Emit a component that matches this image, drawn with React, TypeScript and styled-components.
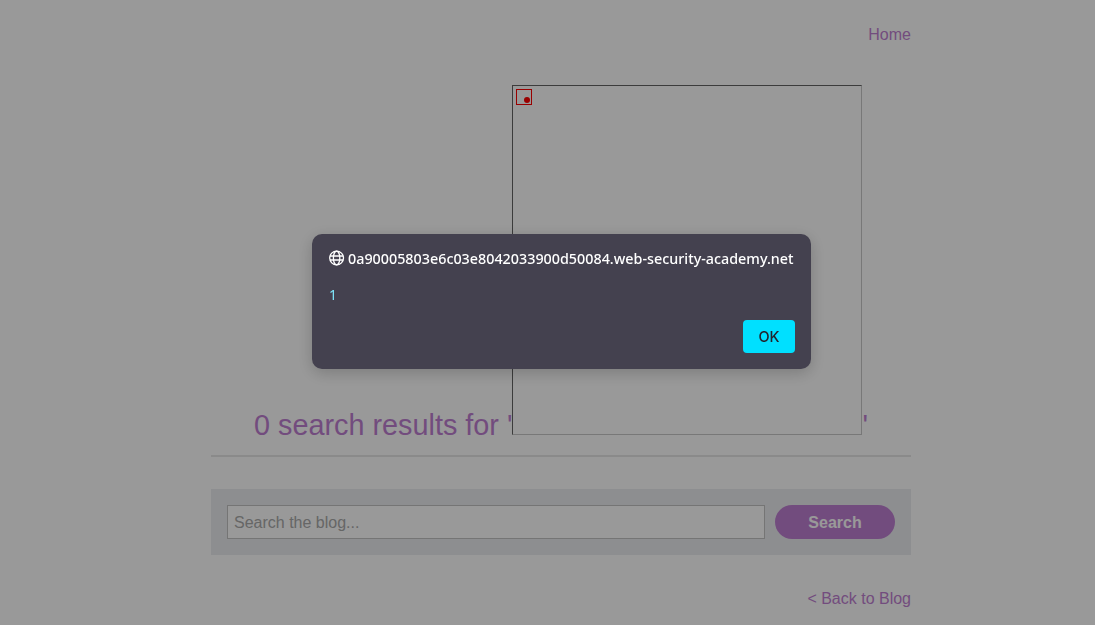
import React from 'react';
import styled, { createGlobalStyle } from 'styled-components';

const GlobalStyle = createGlobalStyle`
  html, body {
    margin: 0;
    padding: 0;
    height: 625px;
    overflow: hidden;
    background: #ffffff;
    font-family: "Liberation Sans", Arial, sans-serif;
  }
`;

const Page = styled.div`
  width: 700px;
  height: 625px;
  margin-left: 211px;
  display: flex;
  flex-direction: column;
`;

const TopNav = styled.nav`
  display: flex;
  justify-content: flex-end;
  height: 85px;
  padding-top: 26px;
  box-sizing: border-box;
`;

const NavLink = styled.a`
  color: #bf7fd2;
  font-size: 16px;
  line-height: 18px;
  text-decoration: none;
`;

const Heading = styled.h1`
  margin: 0;
  height: 372px;
  box-sizing: border-box;
  border-bottom: 2px solid #e6e6e6;
  color: #bf7fd2;
  font-size: 28.8px;
  font-weight: 400;
  line-height: 350px;
  text-align: center;
  white-space: nowrap;
`;

const Frame = styled.div`
  display: inline-block;
  position: relative;
  width: 350px;
  height: 350px;
  box-sizing: border-box;
  border: 1px solid #c8c8c8;
  border-top-color: #646464;
  border-left-color: #646464;
  background: #fff;
  vertical-align: baseline;
`;

const Marker = styled.svg`
  position: absolute;
  left: 3px;
  top: 3px;
  display: block;
`;

const SearchBar = styled.form`
  display: flex;
  align-items: center;
  gap: 10px;
  height: 66px;
  margin-top: 32px;
  padding: 0 16px;
  box-sizing: border-box;
  background: #ebedf0;
`;

const SearchInput = styled.input`
  flex: 1;
  min-width: 0;
  height: 34px;
  box-sizing: border-box;
  padding: 2px 6px 0;
  border: 1px solid #c4c4c4;
  background: #fff;
  font-family: inherit;
  font-size: 16px;
  &::placeholder {
    color: #aaaaaa;
    opacity: 1;
  }
`;

const SearchButton = styled.button`
  width: 120px;
  height: 34px;
  padding: 2px 0 0;
  border: 0;
  border-radius: 17px;
  background: #bf7fd2;
  color: #fff;
  font-family: inherit;
  font-size: 16px;
  font-weight: 700;
`;

const Footer = styled.div`
  display: flex;
  justify-content: flex-end;
  margin-top: 35px;
`;

const Overlay = styled.div`
  position: fixed;
  inset: 0;
  background: rgba(0, 0, 0, 0.4);
`;

const Dialog = styled.div`
  position: fixed;
  left: 312px;
  top: 234px;
  width: 499px;
  height: 135px;
  box-sizing: border-box;
  padding: 16px;
  border-radius: 10px;
  background: #44414f;
  box-shadow: 0 4px 16px rgba(0, 0, 0, 0.2);
  font-family: "Noto Sans", "Open Sans", sans-serif;
  display: flex;
  flex-direction: column;
`;

const DialogTitle = styled.div`
  display: flex;
  align-items: center;
  gap: 3px;
  height: 16px;
  padding-left: 1px;
  color: #fff;
  font-size: 14.33px;
  font-weight: 500;
  white-space: nowrap;
  svg {
    flex-shrink: 0;
  }
`;

const DialogMessage = styled.div`
  margin-top: 20px;
  padding-left: 1px;
  color: #7fe6fa;
  font-size: 14px;
  line-height: 18px;
`;

const DialogActions = styled.div`
  display: flex;
  justify-content: flex-end;
  margin-top: 16px;
`;

const OkButton = styled.button`
  width: 52px;
  height: 33px;
  padding: 0 0 1px 0;
  border: 0;
  border-radius: 4px;
  background: #00e0ff;
  color: #22252e;
  font-family: "Inter", sans-serif;
  font-size: 14.5px;
  font-weight: 500;
`;

const GlobeIcon = () => (
  <svg width="16" height="16" viewBox="0 0 16 16" fill="none" stroke="#fff" strokeWidth="1.3">
    <circle cx="7.6" cy="8" r="6.9" />
    <ellipse cx="7.6" cy="8" rx="3.2" ry="6.9" />
    <path d="M1 6h13.2M1 10h13.2" />
  </svg>
);

export default function App() {
  return (
    <>
      <GlobalStyle />
      <Page>
        <TopNav>
          <NavLink href="#">Home</NavLink>
        </TopNav>
        <Heading>
          0 search results for '
          <Frame>
            <Marker width="16" height="16" viewBox="0 0 16 16">
              <rect x="0.5" y="0.5" width="15" height="15" fill="none" stroke="#ff0000" />
              <circle cx="11" cy="11" r="3" fill="#ff0000" />
            </Marker>
          </Frame>
          '
        </Heading>
        <SearchBar onSubmit={(e) => e.preventDefault()}>
          <SearchInput placeholder="Search the blog..." />
          <SearchButton type="submit">Search</SearchButton>
        </SearchBar>
        <Footer>
          <NavLink href="#">&lt; Back to Blog</NavLink>
        </Footer>
      </Page>
      <Overlay />
      <Dialog role="alertdialog">
        <DialogTitle>
          <GlobeIcon />
          0a90005803e6c03e8042033900d50084.web-security-academy.net
        </DialogTitle>
        <DialogMessage>1</DialogMessage>
        <DialogActions>
          <OkButton type="button">OK</OkButton>
        </DialogActions>
      </Dialog>
    </>
  );
}
